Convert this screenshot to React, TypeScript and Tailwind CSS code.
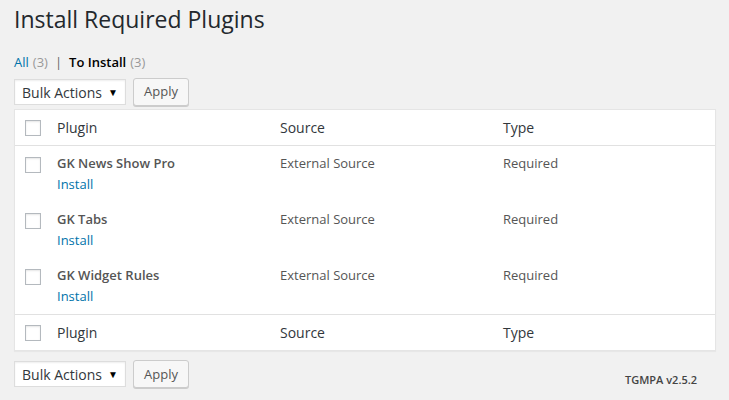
import React from 'react';

const plugins = [
  { name: 'GK News Show Pro', source: 'External Source', type: 'Required' },
  { name: 'GK Tabs', source: 'External Source', type: 'Required' },
  { name: 'GK Widget Rules', source: 'External Source', type: 'Required' },
];

function Checkbox() {
  return (
    <span className="block h-[16px] w-[16px] border border-[#b4b9be] bg-white shadow-[inset_0_1px_2px_rgba(0,0,0,0.1)]" />
  );
}

function BulkActions() {
  return (
    <div className="flex items-center gap-[7px]">
      <div className="flex h-[26px] w-[112px] items-center justify-between border border-[#ddd] bg-white pl-[7px] pr-[7px] text-[14px] text-[#32373c] shadow-[inset_0_1px_2px_rgba(0,0,0,0.07)]">
        <span>Bulk Actions</span>
        <span className="text-[10px] text-black">▼</span>
      </div>
      <button
        type="button"
        className="h-[28px] rounded-[3px] border border-[#ccc] bg-[#f7f7f7] px-[10px] text-[13px] text-[#555] shadow-[0_1px_0_#ccc]"
      >
        Apply
      </button>
    </div>
  );
}

function HeadRow({ top }: { top?: boolean }) {
  return (
    <div
      className={
        'flex h-[36px] items-center text-[14px] text-[#32373c] ' +
        (top ? 'border-b border-[#e1e1e1]' : 'border-t border-[#e1e1e1]')
      }
    >
      <div className="flex w-[32px] justify-end pr-[6px]">
        <Checkbox />
      </div>
      <div className="w-[223px] pl-[10px]">Plugin</div>
      <div className="w-[223px] pl-[10px]">Source</div>
      <div className="flex-1 pl-[10px]">Type</div>
    </div>
  );
}

export default function App() {
  return (
    <div
      className="min-h-[400px] bg-[#f1f1f1] pl-[14px] pr-[13px] text-[13px]"
      style={{ fontFamily: '"Open Sans", "Noto Sans", sans-serif' }}
    >
      <h1 className="pt-[5px] text-[23px] leading-[29px] font-normal text-[#23282d]">
        Install Required Plugins
      </h1>

      <div className="mt-[18px] flex items-center text-[13px] leading-[20px]">
        <span className="text-[#0073aa]">All</span>
        <span className="ml-[4px] text-[#999]">(3)</span>
        <span className="mx-[7px] text-[#666]">|</span>
        <span className="font-semibold text-black">To Install</span>
        <span className="ml-[4px] text-[#999]">(3)</span>
      </div>

      <div className="mt-[6px]">
        <BulkActions />
      </div>

      <div className="mt-[3px] border border-[#e5e5e5] bg-white shadow-[0_1px_1px_rgba(0,0,0,0.04)]">
        <HeadRow top />
        {plugins.map((p) => (
          <div key={p.name} className="flex h-[56px] items-start pt-[7px] leading-[21px] text-[#555]">
            <div className="flex w-[32px] justify-end pr-[6px] pt-[4px]">
              <Checkbox />
            </div>
            <div className="w-[223px] pl-[10px]">
              <div className="font-semibold text-[#555]">{p.name}</div>
              <div className="text-[#0073aa]">Install</div>
            </div>
            <div className="w-[223px] pl-[10px]">{p.source}</div>
            <div className="flex-1 pl-[10px]">{p.type}</div>
          </div>
        ))}
        <HeadRow />
      </div>

      <div className="mt-[9px] flex items-center justify-between">
        <BulkActions />
        <span className="mr-[19px] mt-[12px] text-[11px] font-semibold text-[#444]">TGMPA v2.5.2</span>
      </div>
    </div>
  );
}
